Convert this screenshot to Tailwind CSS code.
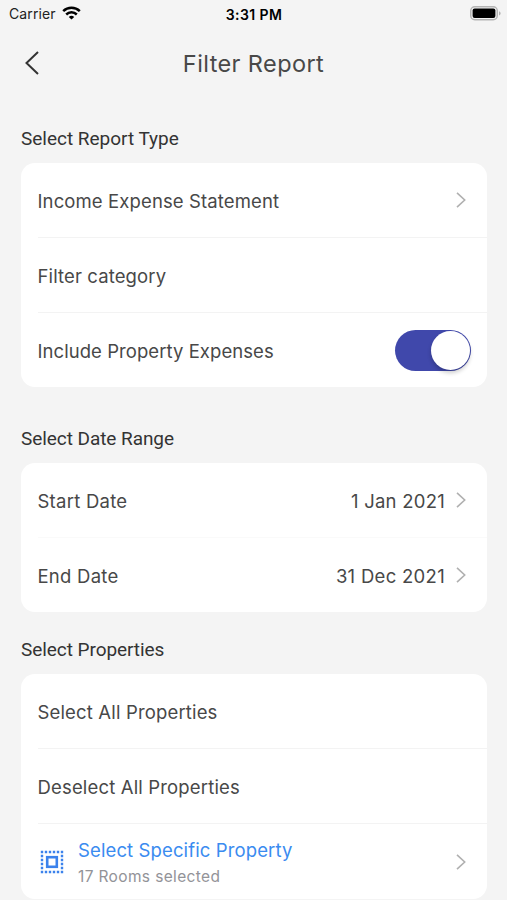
<!DOCTYPE html>
<html lang="en">
<head>
    <meta charset="UTF-8">
    <meta name="viewport" content="width=device-width, initial-scale=1.0">
    <title>Filter Report</title>
    <script src="https://cdn.jsdelivr.net/npm/@tailwindcss/browser@4"></script>
</head>
<body class="h-[900px] overflow-hidden bg-[#f4f4f4] font-['Inter','Liberation_Sans',sans-serif] text-[18.5px] tracking-[0.12px] text-[#484848]">
    <!-- status bar -->
    <header class="grid h-7 grid-cols-3 items-center pl-[9px] pr-[6px] text-[14px] tracking-normal text-black">
        <div class="flex items-center gap-[6px]">
            <span class="-mt-[2px] tracking-[0.1px] text-[#222]">Carrier</span>
            <svg class="-mt-[2px] h-[14px] w-[19px]" viewBox="0 0 19 14" fill="none" stroke="#000" stroke-width="2.5">
                <path d="M1.2 5.2a12 12 0 0 1 16.6 0"/>
                <path d="M4.2 8.5a7.6 7.6 0 0 1 10.6 0"/>
                <path d="M9.5 13.6L6.8 11a3.9 3.9 0 0 1 5.4 0z" fill="#000" stroke="none"/>
            </svg>
        </div>
        <span class="-ml-[2px] text-center text-[14px] font-semibold tracking-[0.4px]">3:31 PM</span>
        <svg class="-mt-[2px] h-[15px] w-[31px] justify-self-end" viewBox="0 0 31 15">
            <rect x="0.75" y="0.75" width="26.5" height="13" rx="4" fill="#f4f4f4" stroke="#b4b4b4" stroke-width="1.5"/>
            <rect x="2.6" y="2.6" width="22.8" height="9.4" rx="2" fill="#000"/>
            <path d="M29 5.2c2.2.8 2.2 3.4 0 4.2z" fill="#b4b4b4"/>
        </svg>
    </header>

    <!-- title bar -->
    <div class="grid h-[70px] grid-cols-[60px_1fr_60px] items-center">
        <svg class="ml-[24px] h-[26px] w-[16px]" viewBox="0 0 16 26" fill="none" stroke="#333" stroke-width="2">
            <path d="M14 2L2.5 13L14 24"/>
        </svg>
        <h1 class="pt-px text-center text-[23.5px] tracking-[0.4px]">Filter Report</h1>
    </div>

    <main class="pl-[21px] pr-5">
        <h2 class="mt-[27px] mb-[10px] h-7 font-['Roboto',sans-serif] text-[19px] leading-7 tracking-[-0.02px] text-[#333]">Select Report Type</h2>
        <section class="h-[224px] rounded-[14px] bg-white pl-[16.5px]">
            <div class="flex h-[75px] items-center justify-between border-b border-[#f3f3f3] pr-[21px]">
                <span class="pt-[3px]">Income Expense Statement</span>
                <svg class="h-4 w-[10px]" viewBox="0 0 10 16" fill="none" stroke="#b0b0b0" stroke-width="1.6"><path d="M1 0.8L8.7 8L1 15.2"/></svg>
            </div>
            <div class="flex h-[75px] items-center border-b border-[#f3f3f3] pt-[3px]">Filter category</div>
            <div class="flex h-[74px] items-center justify-between pr-4">
                <span class="pt-[3px] tracking-[0.06px]">Include Property Expenses</span>
                <div class="flex h-[41px] w-[76px] items-center justify-end rounded-full bg-[#4048ab] pr-[1px]">
                    <div class="size-[39px] rounded-full bg-white shadow-[0_3px_4px_rgba(0,0,0,0.2)]"></div>
                </div>
            </div>
        </section>

        <h2 class="mt-[38px] mb-[10px] h-7 font-['Roboto',sans-serif] text-[19px] leading-7 tracking-[-0.06px] text-[#333]">Select Date Range</h2>
        <section class="h-[149px] rounded-[14px] bg-white pl-[16.5px]">
            <div class="flex h-[75px] items-center border-b border-[#fafafa] pr-[21px]">
                <span class="grow pt-[3px] tracking-[0.25px]">Start Date</span>
                <span class="mr-[11px] pt-[3px] tracking-[0.25px]">1 Jan 2021</span>
                <svg class="h-4 w-[10px]" viewBox="0 0 10 16" fill="none" stroke="#b0b0b0" stroke-width="1.6"><path d="M1 0.8L8.7 8L1 15.2"/></svg>
            </div>
            <div class="flex h-[74px] items-center pr-[21px]">
                <span class="grow pt-[3px] tracking-[0.25px]">End Date</span>
                <span class="mr-[11px] pt-[3px] tracking-[0.3px]">31 Dec 2021</span>
                <svg class="h-4 w-[10px]" viewBox="0 0 10 16" fill="none" stroke="#b0b0b0" stroke-width="1.6"><path d="M1 0.8L8.7 8L1 15.2"/></svg>
            </div>
        </section>

        <h2 class="mt-[24px] mb-[10px] h-7 font-['Roboto',sans-serif] text-[19px] leading-7 tracking-[-0.06px] text-[#333]">Select Properties</h2>
        <section class="h-[225px] rounded-[14px] bg-white pl-[16.5px]">
            <div class="flex h-[75px] items-center border-b border-[#f3f3f3] pt-[3px] tracking-[0.16px]">Select All Properties</div>
            <div class="flex h-[75px] items-center border-b border-[#f3f3f3] pt-[3px] tracking-[0.16px]">Deselect All Properties</div>
            <div class="flex h-[75px] items-center pr-[21px]">
                <svg class="ml-[2.5px] size-6" viewBox="0 0 24 24" fill="none" stroke="#3b82ec">
                    <rect x="7.2" y="7.2" width="9.6" height="9.6" stroke-width="2.6"/>
                    <path d="M0.8 2h22.4M0.8 22h22.4M2 4.8v14.4M22 4.8v14.4" stroke-width="2.4" stroke-dasharray="2.4 1.6"/>
                </svg>
                <div class="ml-[14px] grow pt-[4px]">
                    <p class="leading-[26px] text-[#3a8bf0]">Select Specific Property</p>
                    <p class="text-[15.5px] leading-[27px] tracking-[0.36px] text-[#939398]">17 Rooms selected</p>
                </div>
                <svg class="mt-px h-4 w-[10px]" viewBox="0 0 10 16" fill="none" stroke="#b0b0b0" stroke-width="1.6"><path d="M1 0.8L8.7 8L1 15.2"/></svg>
            </div>
        </section>
    </main>
</body>
</html>
